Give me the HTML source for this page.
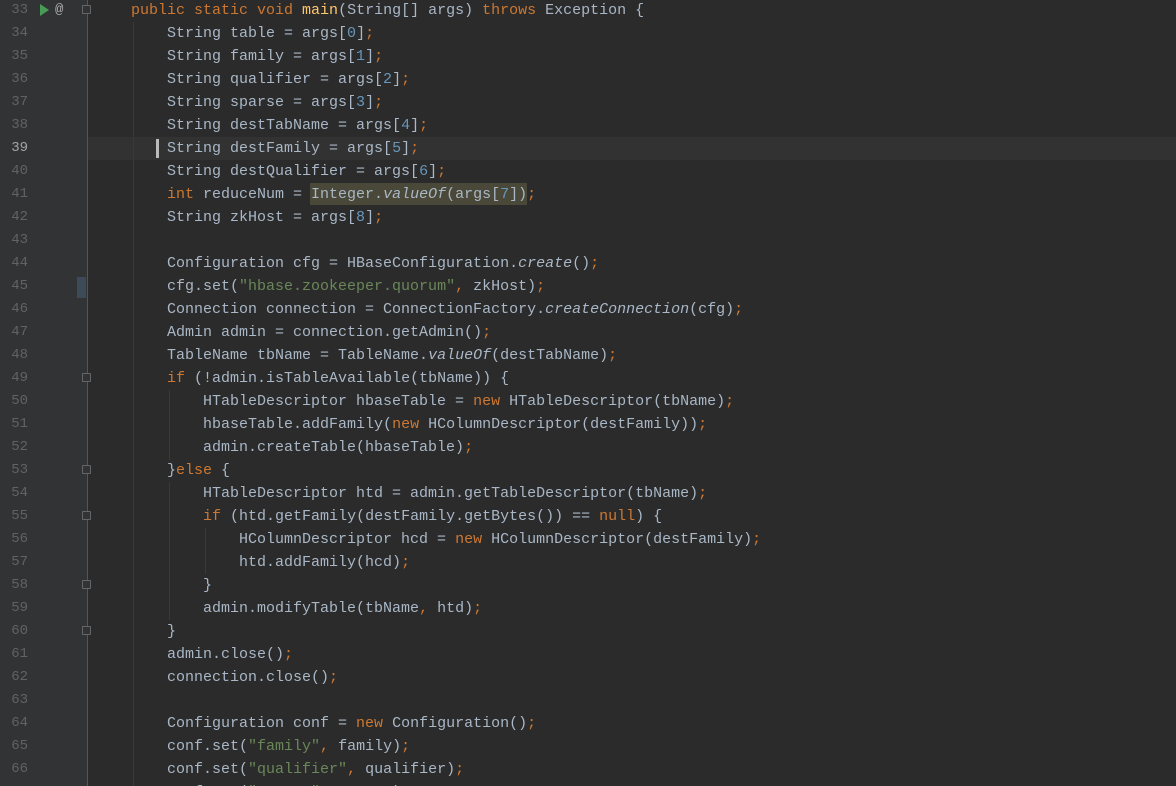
<!DOCTYPE html><html style="overflow:hidden;height:786px"><head><style>
html,body{overflow:hidden;height:786px}
body{margin:0;width:1176px;background:#2b2b2b;font-family:"Liberation Mono",monospace;font-size:15px;position:relative}
.g{position:absolute;left:0;top:0;width:87px;height:786px;background:#313335}
.sep{position:absolute;left:87px;top:0;width:1px;height:786px;background:#555}
.ln{position:absolute;left:0;width:28px;text-align:right;color:#606366;font-size:14px;line-height:23px}
.c{position:absolute;left:95px;white-space:pre;color:#a9b7c6;line-height:23px}
.k{color:#cc7832}.n{color:#6897bb}.s{color:#6a8759}.m{color:#ffc66d}.i{font-style:italic}
.ig{position:absolute;width:1px;background:#393939}
.f{position:absolute;left:82px;width:9px;height:9px;border:1px solid #666;border-radius:1px;box-sizing:border-box;background:#313335}
</style></head><body>
<div style="position:absolute;left:0;top:0;width:1176px;height:786px;overflow:hidden">
<div class="g"></div><div class="sep"></div>
<div style="position:absolute;left:88px;top:137px;width:1088px;height:23px;background:#323232"></div>
<div class="ig" style="left:133px;top:22px;height:764px"></div>
<div class="ig" style="left:169px;top:390px;height:70px"></div>
<div class="ig" style="left:169px;top:482px;height:138px"></div>
<div class="ig" style="left:205px;top:528px;height:46px"></div>
<div style="position:absolute;left:156px;top:139px;width:3px;height:19px;background:#bbb"></div>
<div style="position:absolute;left:77px;top:277px;width:9px;height:21px;background:#3d4a57"></div>
<div style="position:absolute;left:40px;top:4px;width:0;height:0;border-left:9px solid #499c54;border-top:6px solid transparent;border-bottom:6px solid transparent"></div>
<div style="position:absolute;left:55px;top:-1px;color:#aaa;font-size:14px;line-height:23px">@</div>
<div class="f" style="top:5px"></div><div class="f" style="top:373px"></div><div class="f" style="top:465px"></div><div class="f" style="top:511px"></div><div class="f" style="top:580px"></div><div class="f" style="top:626px"></div>
<div style="position:absolute;left:310px;top:183px;width:217px;height:22px;background:#4a4838"></div>
<div id="L"></div>
</div>
<script>
var code=[
'    <span class="k">public static void </span><span class="m">main</span>(String[] args) <span class="k">throws </span>Exception {',
'        String table = args[<span class="n">0</span>]<span class="k">;</span>',
'        String family = args[<span class="n">1</span>]<span class="k">;</span>',
'        String qualifier = args[<span class="n">2</span>]<span class="k">;</span>',
'        String sparse = args[<span class="n">3</span>]<span class="k">;</span>',
'        String destTabName = args[<span class="n">4</span>]<span class="k">;</span>',
'        String destFamily = args[<span class="n">5</span>]<span class="k">;</span>',
'        String destQualifier = args[<span class="n">6</span>]<span class="k">;</span>',
'        <span class="k">int </span>reduceNum = Integer.<span class="i">valueOf</span>(args[<span class="n">7</span>])<span class="k">;</span>',
'        String zkHost = args[<span class="n">8</span>]<span class="k">;</span>',
'',
'        Configuration cfg = HBaseConfiguration.<span class="i">create</span>()<span class="k">;</span>',
'        cfg.set(<span class="s">"hbase.zookeeper.quorum"</span><span class="k">, </span>zkHost)<span class="k">;</span>',
'        Connection connection = ConnectionFactory.<span class="i">createConnection</span>(cfg)<span class="k">;</span>',
'        Admin admin = connection.getAdmin()<span class="k">;</span>',
'        TableName tbName = TableName.<span class="i">valueOf</span>(destTabName)<span class="k">;</span>',
'        <span class="k">if </span>(!admin.isTableAvailable(tbName)) {',
'            HTableDescriptor hbaseTable = <span class="k">new </span>HTableDescriptor(tbName)<span class="k">;</span>',
'            hbaseTable.addFamily(<span class="k">new </span>HColumnDescriptor(destFamily))<span class="k">;</span>',
'            admin.createTable(hbaseTable)<span class="k">;</span>',
'        }<span class="k">else </span>{',
'            HTableDescriptor htd = admin.getTableDescriptor(tbName)<span class="k">;</span>',
'            <span class="k">if </span>(htd.getFamily(destFamily.getBytes()) == <span class="k">null</span>) {',
'                HColumnDescriptor hcd = <span class="k">new </span>HColumnDescriptor(destFamily)<span class="k">;</span>',
'                htd.addFamily(hcd)<span class="k">;</span>',
'            }',
'            admin.modifyTable(tbName<span class="k">, </span>htd)<span class="k">;</span>',
'        }',
'        admin.close()<span class="k">;</span>',
'        connection.close()<span class="k">;</span>',
'',
'        Configuration conf = <span class="k">new </span>Configuration()<span class="k">;</span>',
'        conf.set(<span class="s">"family"</span><span class="k">, </span>family)<span class="k">;</span>',
'        conf.set(<span class="s">"qualifier"</span><span class="k">, </span>qualifier)<span class="k">;</span>',
'        conf.set(<span class="s">"sparse"</span><span class="k">, </span>sparse)<span class="k">;</span>'];
var h='';
for(var i=0;i<code.length;i++){var t=-1+23*i;var col=(i==6)?'#a4a3a3':'#606366';
h+='<div class="ln" style="top:'+t+'px;color:'+col+'">'+(33+i)+'</div><div class="c" style="top:'+t+'px">'+code[i]+'</div>';}
document.getElementById('L').innerHTML=h;
</script>
</body></html>
